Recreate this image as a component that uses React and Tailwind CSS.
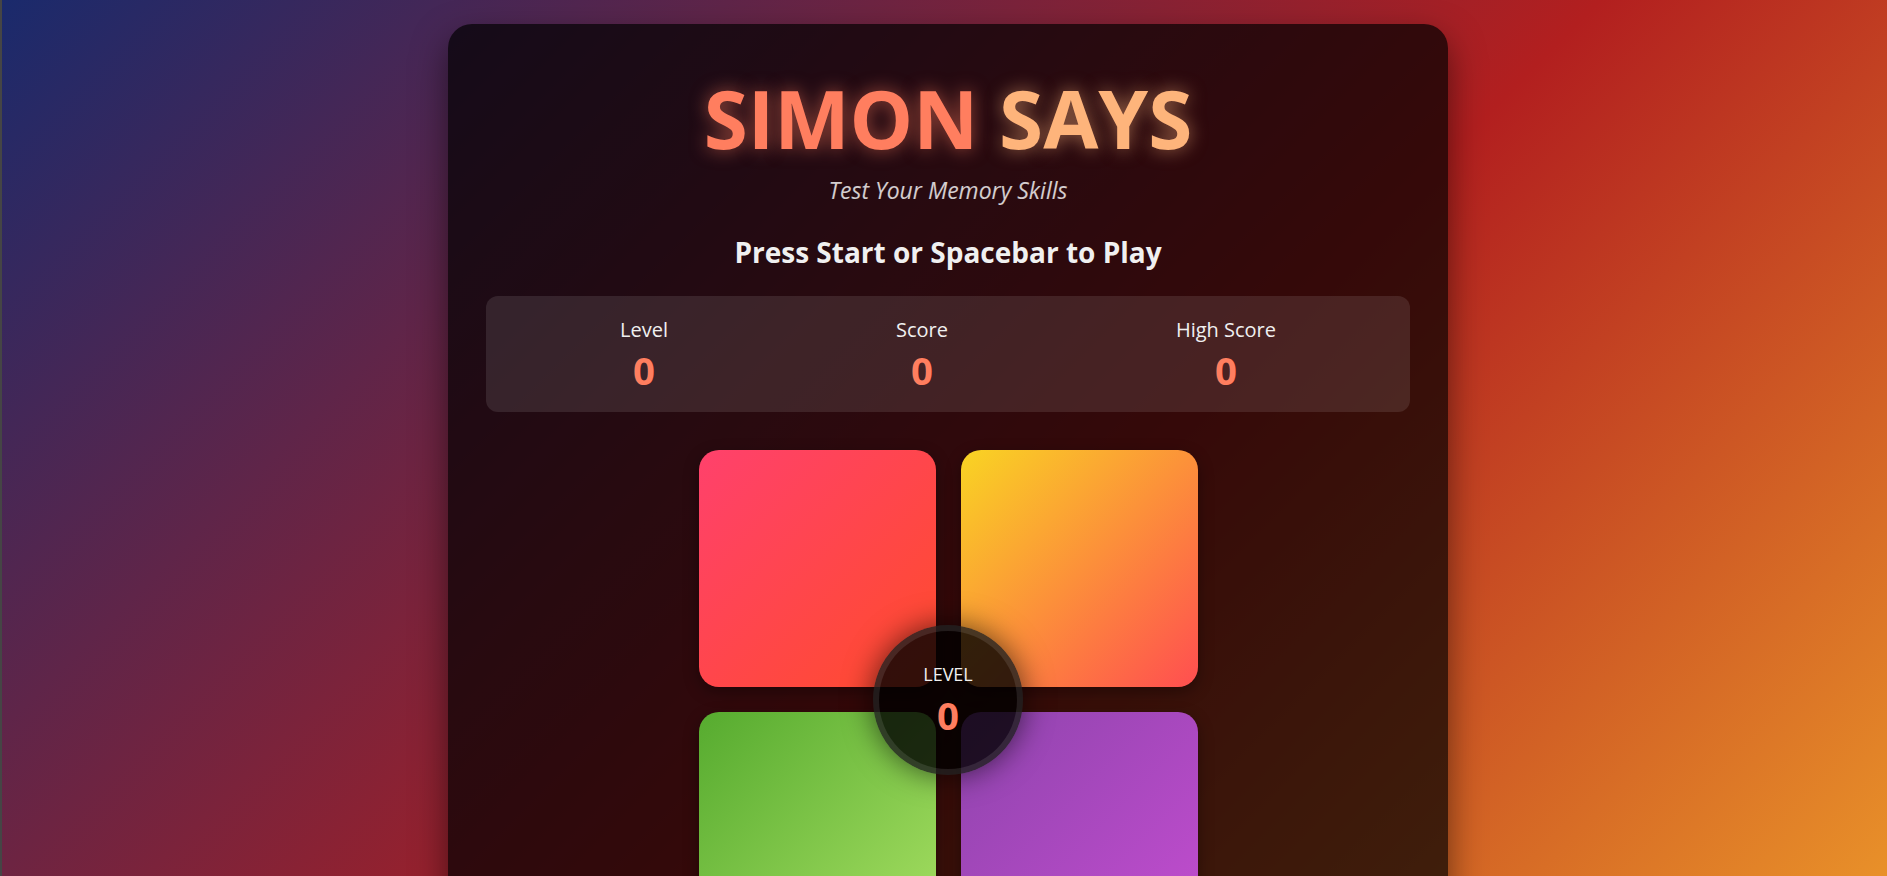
import React from "react";

const pads = [
  { id: "red", bg: "bg-[linear-gradient(135deg,#ff416c,#ff4b2b)]" },
  { id: "yellow", bg: "bg-[linear-gradient(135deg,#f9d423,#ff4e50)]" },
  { id: "green", bg: "bg-[linear-gradient(135deg,#56ab2f,#a8e063)]" },
  { id: "purple", bg: "bg-[linear-gradient(135deg,#8e44ad,#c44dd0)]" },
];

const stats = [
  { label: "Level", value: 0 },
  { label: "Score", value: 0 },
  { label: "High Score", value: 0 },
];

const App = () => {
  return (
    <div className="min-h-[1313px] w-full border-l-2 border-[#454545] bg-[linear-gradient(135deg,#1a2a6c,#b21f1f,#fdbb2d)] flex justify-center pl-[7px] pt-6 font-['Open_Sans',sans-serif]">
      <div className="w-[1000px] min-h-[1000px] self-start rounded-3xl bg-black/70 shadow-[0_15px_35px_rgba(0,0,0,0.5)] pt-[54px] pb-12 px-[38px] flex flex-col items-center text-center">
        {/* Title */}
        <h1 className="text-[80px] leading-[80px] font-bold">
          <span className="text-[#ff7e5f] [text-shadow:0_0_18px_rgba(255,126,95,0.55)]">SIMON</span>{" "}
          <span className="text-[#feb47b] [text-shadow:0_0_18px_rgba(254,180,123,0.55)]">SAYS</span>
        </h1>
        <p className="mt-[17px] text-[23px] leading-[30px] italic text-white/80">Test Your Memory Skills</p>
        <h2 className="mt-[29px] text-[28px] leading-[36px] font-bold text-[#f0f0f0]">Press Start or Spacebar to Play</h2>

        {/* Stats */}
        <div className="mt-[26px] w-full rounded-xl bg-white/10 px-5 py-5 flex justify-around">
          {stats.map((s) => (
            <div key={s.label} className="flex flex-col items-center">
              <span className="text-[20px] leading-[28px] text-[#f0f0f0]">{s.label}</span>
              <span className="mt-[4px] text-[38.4px] leading-[44px] font-bold text-[#ff7e5f]">{s.value}</span>
            </div>
          ))}
        </div>

        {/* Board */}
        <div className="relative mt-[38px] grid grid-cols-[237px_237px] gap-[25px]">
          {pads.map((p) => (
            <button
              key={p.id}
              className={`h-[237px] w-[237px] rounded-[20px] ${p.bg} shadow-[0_5px_15px_rgba(0,0,0,0.35)]`}
            />
          ))}
          <div className="absolute left-1/2 top-1/2 -translate-x-1/2 -translate-y-1/2 h-[150px] w-[150px] rounded-full border-[6px] border-white/10 bg-black/80 shadow-[0_0_30px_rgba(0,0,0,0.6)] flex flex-col items-center justify-center">
            <span className="text-[18px] leading-[24px] text-[#f0f0f0]">LEVEL</span>
            <span className="mt-[7px] text-[38.4px] leading-[44px] font-bold text-[#ff7e5f]">0</span>
          </div>
        </div>
      </div>
    </div>
  );
};

export default App;
